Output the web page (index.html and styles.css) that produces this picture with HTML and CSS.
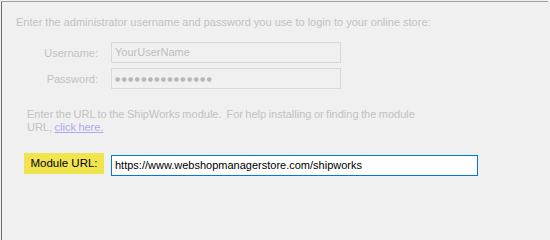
FILE: index.html
```html
<!DOCTYPE html>
<html>
<head>
<meta charset="utf-8">
<link rel="stylesheet" href="styles.css">
</head>
<body>
<div class="frame">
  <p class="intro">Enter the administrator username and password you use to login to your online store:</p>
  <div class="creds">
    <div class="row">
      <span class="label">Username:</span>
      <div class="field">YourUserName</div>
    </div>
    <div class="row">
      <span class="label">Password:</span>
      <div class="field dots">●●●●●●●●●●●●●●●</div>
    </div>
  </div>
  <p class="help">Enter the URL to the ShipWorks module.&nbsp; For help installing or finding the module<br>URL, <a class="link" href="#">click here.</a></p>
  <div class="module">
    <span class="module-label">Module URL:</span>
    <div class="url-field">https://www.webshopmanagerstore.com/shipworks</div>
  </div>
</div>
</body>
</html>
```
FILE: styles.css
```css
html, body {
  margin: 0;
  padding: 0;
  background: #f0f0f0;
}
body {
  width: 550px;
  height: 240px;
  overflow: hidden;
}
.frame {
  box-sizing: border-box;
  margin: 1px 0 0 1px;
  width: 547px;
  height: 239px;
  border-left: 1px solid #6e6e6e;
  border-top: 1px solid #a0a0a0;
  padding: 14px 0 0 14px;
  font-family: "Liberation Sans", Arial, sans-serif;
  font-size: 11px;
  color: #c2c2c2;
}
.intro {
  margin: 0;
  line-height: 13px;
}
.creds {
  display: flex;
  flex-direction: column;
  gap: 5px;
  margin-top: 13px;
}
.row {
  display: flex;
  align-items: center;
  gap: 13px;
}
.label {
  width: 82px;
  text-align: right;
}
.field {
  box-sizing: border-box;
  width: 230px;
  height: 21px;
  border: 1px solid #d9d9d9;
  padding: 0 3px;
  line-height: 19px;
  color: #bdbdbd;
}
.dots {
  font-family: "DejaVu Sans", sans-serif;
  font-size: 6px;
  letter-spacing: 1.3px;
  color: #b8b8b8;
}
.help {
  margin: 19px 0 0 11px;
  line-height: 13px;
  word-spacing: -0.6px;
}
.link {
  color: #a9a9ef;
  text-decoration: underline;
}
.module {
  display: flex;
  align-items: flex-start;
  gap: 7px;
  margin: 19px 0 0 8px;
}
.module-label {
  box-sizing: border-box;
  width: 80px;
  height: 21px;
  background: #f0e54e;
  color: #000;
  font-size: 11.5px;
  line-height: 21px;
  text-align: center;
}
.url-field {
  box-sizing: border-box;
  width: 367px;
  height: 21px;
  margin-top: 2px;
  background: #fff;
  border: 1px solid #0078d7;
  padding: 0 3px;
  line-height: 19px;
  color: #000;
  font-size: 11px;
}
```
